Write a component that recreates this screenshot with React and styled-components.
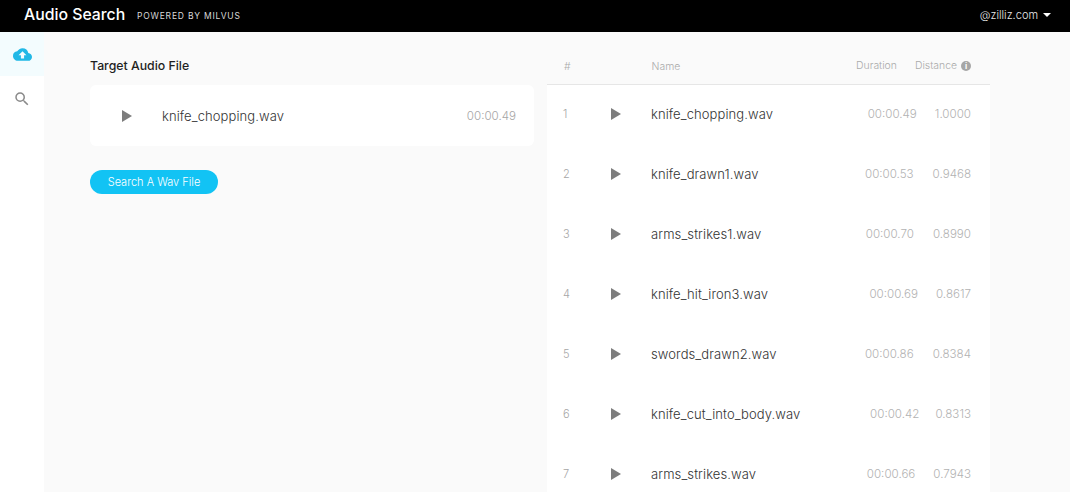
import styled, { createGlobalStyle } from "styled-components";

const GlobalStyle = createGlobalStyle`
  html, body { margin: 0; padding: 0; height: 100%; overflow: hidden; }
  body { font-family: Inter, "Open Sans", "Liberation Sans", sans-serif; background: #fafafa; }
`;

const Page = styled.div`
  width: 1070px;
  height: 492px;
  display: flex;
  flex-direction: column;
  overflow: hidden;
`;

const Header = styled.header`
  flex: 0 0 32px;
  background: #000;
  color: #fff;
  display: flex;
  align-items: center;
  padding: 0 19px 3px 24px;
  box-sizing: border-box;
`;

const Logo = styled.div`
  font-size: 15.8px;
  font-weight: 500;
  width: 113px;
`;

const Powered = styled.div`
  font-size: 8.5px;
  letter-spacing: 0.8px;
  color: #d8d8d8;
  margin-top: 2px;
`;

const UserMenu = styled.div`
  margin-left: auto;
  display: flex;
  align-items: center;
  gap: 5px;
  font-size: 11px;
  font-weight: 300;
  color: #e8e8e8;
`;

const Caret = styled.span`
  width: 0;
  height: 0;
  border-left: 4px solid transparent;
  border-right: 4px solid transparent;
  border-top: 4px solid #fff;
  margin-top: 1px;
`;

const Body = styled.div`
  flex: 1;
  display: flex;
  min-height: 0;
`;

const Sidebar = styled.nav`
  flex: 0 0 44px;
  background: #fff;
`;

const SideItem = styled.div`
  height: 44px;
  display: flex;
  align-items: center;
  justify-content: center;
  padding-top: ${(props) => (props.$active ? "0" : "2px")};
  box-sizing: border-box;
  background: ${(props) => (props.$active ? "#f3fcfe" : "#fff")};
`;

const Left = styled.section`
  flex: 0 0 490px;
  box-sizing: border-box;
  padding: 25px 0 0 46px;
  margin-right: 13px;
`;

const SectionTitle = styled.h2`
  margin: 0 0 12px;
  font-size: 12.3px;
  line-height: 16px;
  font-weight: 500;
  color: #1f1f1f;
  position: relative;
  top: 1px;
`;

const TargetCard = styled.div`
  height: 61px;
  background: #fff;
  border-radius: 6px;
  display: flex;
  align-items: center;
  padding: 0 18px 0 32px;
`;

const TargetName = styled.div`
  margin-left: 30px;
  font-size: 13px;
  letter-spacing: 0.1px;
  font-weight: 300;
  color: #333;
`;

const Time = styled.div`
  margin-left: auto;
  font-size: 11.6px;
  font-weight: 300;
  color: #a6a6a6;
`;

const SearchButton = styled.button`
  display: block;
  margin-top: 24px;
  width: 128px;
  height: 24px;
  border: none;
  border-radius: 12px;
  background: #12c3f4;
  color: #fff;
  font-family: inherit;
  font-size: 11px;
  font-weight: 300;
  padding: 0;
`;

const Right = styled.section`
  flex: 0 0 443px;
  display: flex;
  flex-direction: column;
  min-height: 0;
`;

const TableHead = styled.div`
  flex: 0 0 53px;
  box-sizing: border-box;
  border-bottom: 1px solid #e6e6e6;
  display: flex;
  align-items: center;
  padding: 16px 19px 0 17px;
  font-size: 10.4px;
  font-weight: 300;
  color: #aaa;
`;

const HeadName = styled.div`
  margin-left: 81px;
`;

const HeadDuration = styled.div`
  margin-left: auto;
  margin-top: -2px;
`;

const HeadDistance = styled.div`
  margin-left: 18px;
  display: flex;
  align-items: center;
  gap: 4px;
  margin-top: -1px;
`;

const InfoDot = styled.span`
  width: 10px;
  height: 10px;
  border-radius: 50%;
  background: #a6a6a6;
  color: #fff;
  font-size: 8px;
  font-weight: 700;
  line-height: 10px;
  text-align: center;
`;

const Row = styled.div`
  flex: 0 0 60px;
  background: #fff;
  display: flex;
  align-items: center;
  padding: 0 19px 2px 16px;
  box-sizing: border-box;
`;

const Index = styled.div`
  width: 48px;
  font-size: 11px;
  font-weight: 300;
  color: #a6a6a6;
`;

const Name = styled.div`
  margin-left: 30px;
  font-size: 13px;
  letter-spacing: 0.1px;
  font-weight: 300;
  color: #333;
`;

const Duration = styled.div`
  margin-left: auto;
  margin-right: ${(props) => props.$gap}px;
  font-size: 11.6px;
  font-weight: 300;
  color: #b2b2b2;
`;

const Distance = styled.div`
  font-size: 11.6px;
  font-weight: 300;
  color: #b2b2b2;
`;

const PlayIcon = () => (
  <svg width="10" height="12" viewBox="0 0 10 12">
    <path d="M0 0L10 6L0 12Z" fill="#7d7d7d" />
  </svg>
);

const rows = [
  ["knife_chopping.wav", "00:00.49", "1.0000", 18],
  ["knife_drawn1.wav", "00:00.53", "0.9468", 19],
  ["arms_strikes1.wav", "00:00.70", "0.8990", 19],
  ["knife_hit_iron3.wav", "00:00.69", "0.8617", 18],
  ["swords_drawn2.wav", "00:00.86", "0.8384", 19],
  ["knife_cut_into_body.wav", "00:00.42", "0.8313", 16],
  ["arms_strikes.wav", "00:00.66", "0.7943", 18],
];

const App = () => {
  return (
    <Page>
      <GlobalStyle />
      <Header>
        <Logo>Audio Search</Logo>
        <Powered>POWERED BY MILVUS</Powered>
        <UserMenu>@zilliz.com <Caret /></UserMenu>
      </Header>
      <Body>
        <Sidebar>
          <SideItem $active>
            <svg width="19" height="19" viewBox="0 0 24 24" preserveAspectRatio="none">
              <path
                fill="#21b8e6"
                d="M19.35 10.04A7.49 7.49 0 0 0 12 4C9.11 4 6.6 5.64 5.35 8.04A5.994 5.994 0 0 0 0 14c0 3.31 2.69 6 6 6h13c2.76 0 5-2.24 5-5 0-2.64-2.05-4.78-4.65-4.96zM14 13v4h-4v-4H7l5-5 5 5h-3z"
              />
            </svg>
          </SideItem>
          <SideItem>
            <svg width="18" height="18" viewBox="0 0 24 24">
              <path
                fill="#8a8a8a"
                d="M15.5 14h-.79l-.28-.27A6.47 6.47 0 0 0 16 9.5 6.5 6.5 0 1 0 9.5 16c1.61 0 3.09-.59 4.23-1.57l.27.28v.79l5 4.99L20.49 19l-4.99-5zm-6 0C7.01 14 5 11.99 5 9.5S7.01 5 9.5 5 14 7.01 14 9.5 11.99 14 9.5 14z"
              />
            </svg>
          </SideItem>
        </Sidebar>
        <Left>
          <SectionTitle>Target Audio File</SectionTitle>
          <TargetCard>
            <PlayIcon />
            <TargetName>knife_chopping.wav</TargetName>
            <Time>00:00.49</Time>
          </TargetCard>
          <SearchButton>Search A Wav File</SearchButton>
        </Left>
        <Right>
          <TableHead>
            <div>#</div>
            <HeadName>Name</HeadName>
            <HeadDuration>Duration</HeadDuration>
            <HeadDistance>Distance <InfoDot>i</InfoDot></HeadDistance>
          </TableHead>
          {rows.map((row, i) => (
            <Row key={row[0]}>
              <Index>{i + 1}</Index>
              <PlayIcon />
              <Name>{row[0]}</Name>
              <Duration $gap={row[3]}>{row[1]}</Duration>
              <Distance>{row[2]}</Distance>
            </Row>
          ))}
        </Right>
      </Body>
    </Page>
  );
};

export default App;
